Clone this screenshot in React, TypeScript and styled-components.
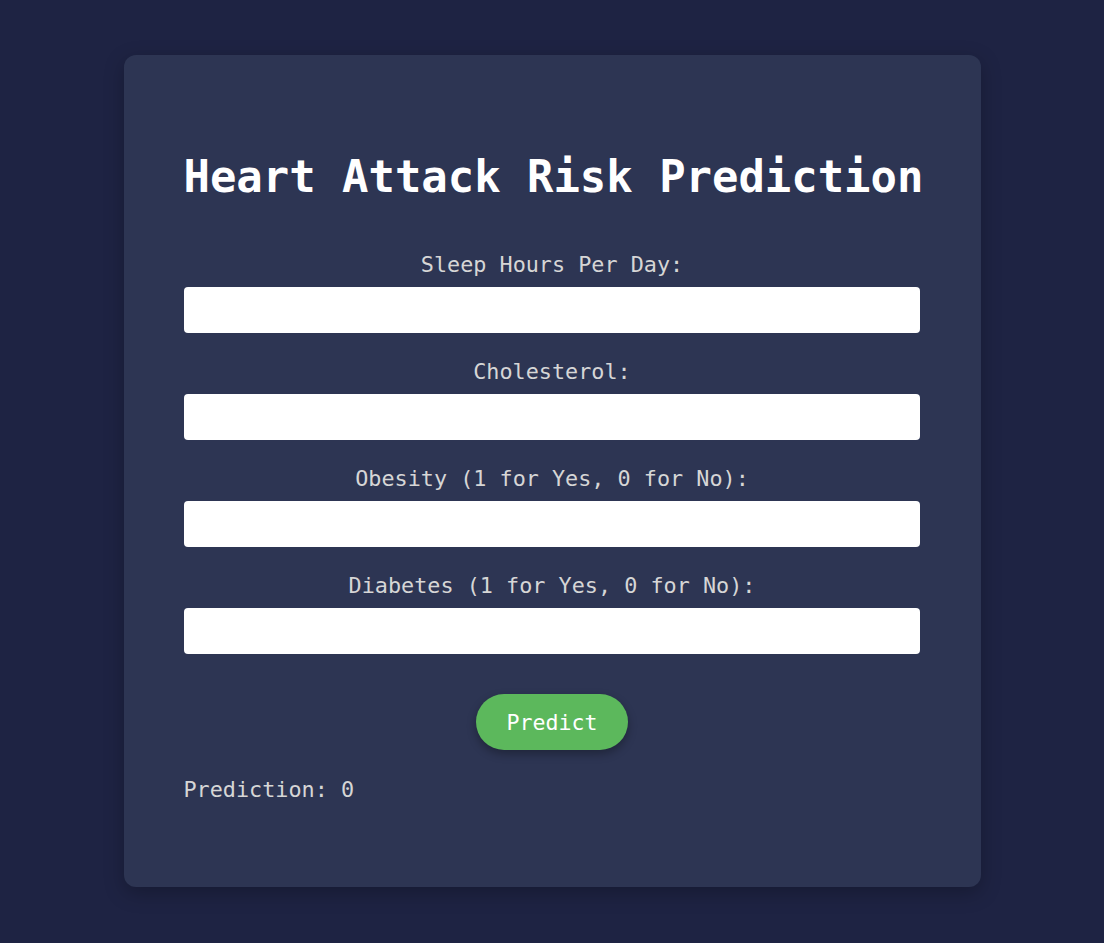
import React from "react";
import styled, { createGlobalStyle } from "styled-components";

const GlobalStyle = createGlobalStyle`
  html, body {
    margin: 0;
    padding: 0;
    background: #1e2343;
  }
  body {
    font-family: "DejaVu Sans Mono", "Liberation Mono", monospace;
  }
  * { box-sizing: border-box; }
`;

const Page = styled.div`
  min-height: 943px;
  display: flex;
  justify-content: center;
  align-items: flex-start;
  padding-top: 55px;
`;

const Card = styled.div`
  width: 857px;
  background: #2d3553;
  border-radius: 12px;
  padding: 60px 60px 84px;
  box-shadow: 0 6px 20px rgba(0, 0, 0, 0.25);
  display: flex;
  flex-direction: column;
`;

const Title = styled.h1`
  margin: 36px 0 48px;
  font-size: 43.9px;
  line-height: 52px;
  font-weight: bold;
  color: #ffffff;
  text-align: center;
  white-space: nowrap;
`;

const Form = styled.form`
  display: flex;
  flex-direction: column;
  align-items: stretch;
`;

const Field = styled.div<{ $last?: boolean }>`
  display: flex;
  flex-direction: column;
  gap: 9px;
  margin-bottom: ${(p) => (p.$last ? "40px" : "25px")};
`;

const Label = styled.label`
  font-size: 21.8px;
  line-height: 27px;
  color: #d6d6d6;
  text-align: center;
`;

const Input = styled.input`
  width: 736px;
  height: 46px;
  border: none;
  border-radius: 4px;
  background: #ffffff;
  padding: 0 12px;
  font-family: inherit;
  font-size: 18px;
  outline: none;
`;

const Button = styled.button`
  align-self: center;
  padding: 16px 30px 14px;
  border: none;
  border-radius: 28px;
  background: #5cb85c;
  color: #ffffff;
  font-family: inherit;
  font-size: 21.6px;
  line-height: 26px;
  cursor: pointer;
  box-shadow: 0 4px 10px rgba(0, 0, 0, 0.3);
`;

const Result = styled.p`
  margin: 27px 0 0;
  font-size: 21.8px;
  line-height: 26px;
  color: #d6d6d6;
`;

const fields = [
  "Sleep Hours Per Day:",
  "Cholesterol:",
  "Obesity (1 for Yes, 0 for No):",
  "Diabetes (1 for Yes, 0 for No):",
];

export default function App() {
  return (
    <>
      <GlobalStyle />
      <Page>
        <Card>
          <Title>Heart Attack Risk Prediction</Title>
          <Form onSubmit={(e) => e.preventDefault()}>
            {fields.map((f, i) => (
              <Field key={f} $last={i === fields.length - 1}>
                <Label>{f}</Label>
                <Input type="text" />
              </Field>
            ))}
            <Button type="submit">Predict</Button>
          </Form>
          <Result>Prediction: 0</Result>
        </Card>
      </Page>
    </>
  );
}
